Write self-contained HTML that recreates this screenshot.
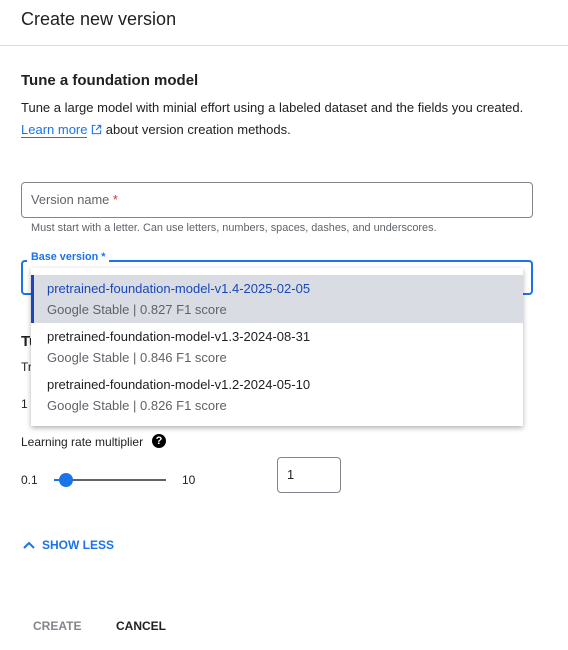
<!DOCTYPE html><html><head><style>
body{margin:0;width:568px;height:650px;background:#fff;font-family:"Liberation Sans",sans-serif;color:#202124;position:relative;overflow:hidden}
.a{position:absolute;white-space:nowrap}
</style></head><body>
<div class="a" style="left:21px;top:9px;font-size:18px;">Create new version</div>
<div class="a" style="left:0;top:45px;width:568px;height:1px;background:#dadce0"></div>
<div class="a" style="left:21px;top:72px;font-size:15px;font-weight:bold;">Tune a foundation model</div>
<div class="a" style="left:21px;top:100px;font-size:13px;">Tune a large model with minial effort using a labeled dataset and the fields you created.</div>
<div class="a" style="left:21px;top:122px;font-size:13px;"><span style="color:#1a73e8;border-bottom:1px solid #1a73e8">Learn more</span> <svg width="11" height="11" viewBox="0 0 12 12" style="vertical-align:-1px"><path d="M5 1.5H1.5v9h9V7M7 1.5h3.5V5M10.5 1.5L5.5 6.5" fill="none" stroke="#1a73e8" stroke-width="1.2"/></svg> about version creation methods.</div>
<div class="a" style="left:21px;top:182px;width:510px;height:34px;border:1px solid #80868b;border-radius:4px"></div>
<div class="a" style="left:31px;top:192px;font-size:12.8px;color:#5f6368">Version name <span style="color:#d93025">*</span></div>
<div class="a" style="left:31px;top:222px;font-size:10.9px;color:#5f6368">Must start with a letter. Can use letters, numbers, spaces, dashes, and underscores.</div>
<div class="a" style="left:21px;top:260px;width:508px;height:31px;border:2px solid #1a73e8;border-radius:4px"></div>
<div class="a" style="left:27px;top:251px;font-size:10.8px;color:#1a73e8;background:#fff;padding:0 4px;font-weight:bold">Base version *</div>
<div class="a" style="left:21px;top:333px;font-size:15px;font-weight:bold">Tu</div>
<div class="a" style="left:21px;top:360px;font-size:12px">Tr</div>
<div class="a" style="left:21px;top:397px;font-size:12px">1</div>
<div class="a" style="left:31px;top:268px;width:492px;height:158px;background:#fff;box-shadow:0 2px 5px rgba(0,0,0,.3)">
 <div style="position:absolute;left:0;top:7px;width:492px;height:48px;background:#d9dce3;border-left:3px solid #1a47b8;box-sizing:border-box"></div>
 <div class="a" style="left:16px;top:13px;font-size:13px;color:#1a47b8">pretrained-foundation-model-v1.4-2025-02-05</div>
 <div class="a" style="left:16px;top:34px;font-size:13px;color:#5f6368">Google Stable | 0.827 F1 score</div>
 <div class="a" style="left:16px;top:61px;font-size:13px">pretrained-foundation-model-v1.3-2024-08-31</div>
 <div class="a" style="left:16px;top:82px;font-size:13px;color:#5f6368">Google Stable | 0.846 F1 score</div>
 <div class="a" style="left:16px;top:109px;font-size:13px">pretrained-foundation-model-v1.2-2024-05-10</div>
 <div class="a" style="left:16px;top:130px;font-size:13px;color:#5f6368">Google Stable | 0.826 F1 score</div>
</div>
<div class="a" style="left:21px;top:435px;font-size:12px">Learning rate multiplier</div>
<div class="a" style="left:152px;top:434px;width:14px;height:14px;border-radius:50%;background:#000;color:#fff;font-size:11px;font-weight:bold;text-align:center;line-height:14px">?</div>
<div class="a" style="left:21px;top:473px;font-size:12px">0.1</div>
<div class="a" style="left:54px;top:479px;width:112px;height:2px;background:#5f6368"></div>
<div class="a" style="left:54px;top:479px;width:12px;height:2px;background:#1a73e8"></div>
<div class="a" style="left:59px;top:473px;width:14px;height:14px;border-radius:50%;background:#1a73e8"></div>
<div class="a" style="left:182px;top:473px;font-size:12px">10</div>
<div class="a" style="left:277px;top:457px;width:62px;height:34px;border:1px solid #80868b;border-radius:4px"></div>
<div class="a" style="left:287px;top:467px;font-size:12.8px">1</div>
<svg class="a" style="left:22px;top:540px" width="14" height="10" viewBox="0 0 14 10"><path d="M2 8L7 3l5 5" fill="none" stroke="#1a73e8" stroke-width="2"/></svg>
<div class="a" style="left:42px;top:538px;font-size:12px;font-weight:bold;color:#1a73e8">SHOW LESS</div>
<div class="a" style="left:33px;top:619px;font-size:12px;font-weight:bold;color:#80868b">CREATE</div>
<div class="a" style="left:116px;top:619px;font-size:12px;font-weight:bold;color:#202124">CANCEL</div>
</body></html>
